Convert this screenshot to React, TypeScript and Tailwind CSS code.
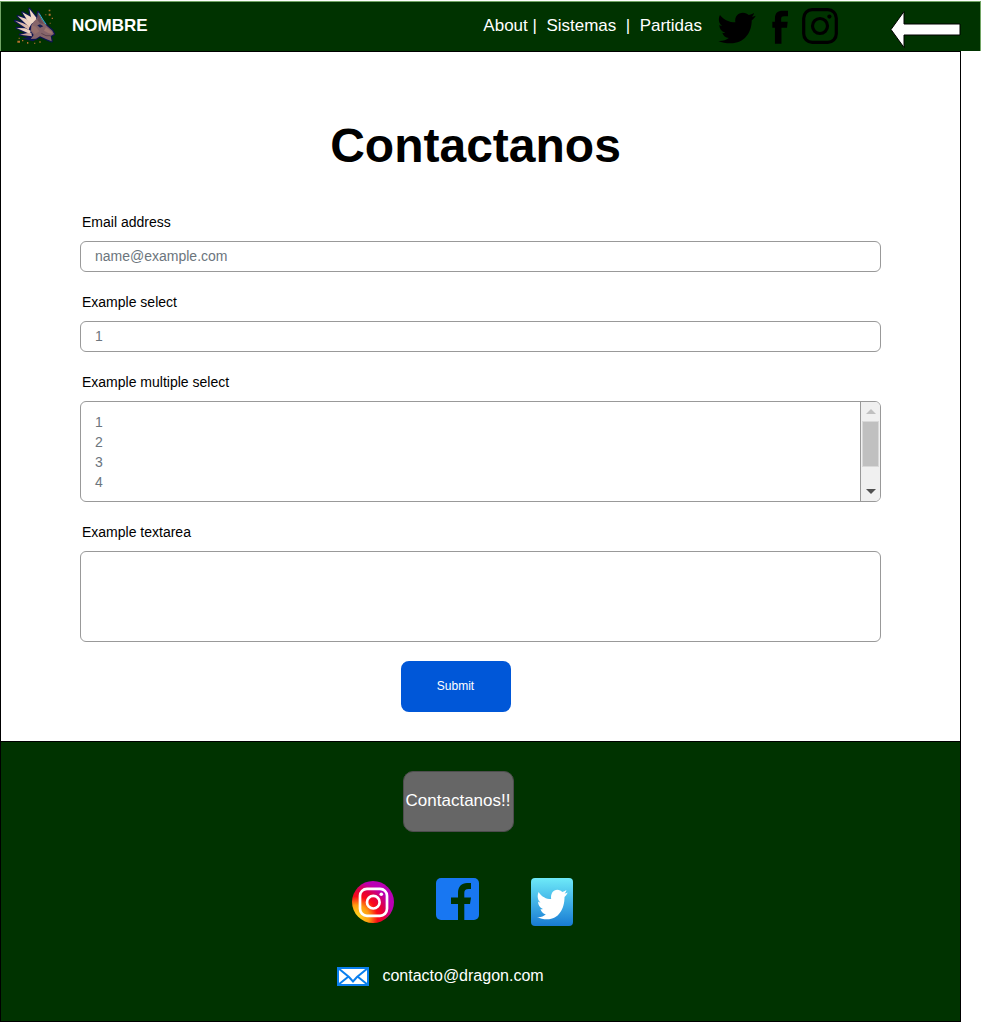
import React from "react";

function DragonShapes() {
  return (
    <>
      <path d="M52 14 L72 40 L74 50 L60 54 Z" fill="#f0d8c6" />
      <path d="M31 25 L56 38 L67 54 L54 62 Z" fill="#f0d8c6" />
      <path d="M17 36 L42 44 L59 59 L52 70 Z" fill="#ecd0be" />
      <path d="M9 50 L32 57 L53 67 L50 78 Z" fill="#dcb9aa" />
      <path d="M14 72 L40 73 L56 80 L54 90 Z" fill="#ecd0be" />
      <path d="M24 92 L44 88 L58 86 L60 97 Z" fill="#c9a59b" />
      <path
        d="M78 24 L90 46 L104 65 L121 80 L126 90 L116 96 L119 112 L102 105 L84 97 L72 104 L56 105 L65 93 L56 80 L58 63 L68 50 L76 42 Z"
        fill="#86656a"
      />
    </>
  );
}

function DragonLogo() {
  return (
    <svg viewBox="0 0 138 132" className="h-11 w-[46px] shrink-0" aria-hidden="true">
      <g stroke="#0d1452" strokeWidth="7" strokeLinejoin="round">
        <DragonShapes />
      </g>
      <path d="M30 104 L60 96 L84 98 L64 112 Z" fill="#0d1452" />
      <DragonShapes />
      <path d="M79 28 L88 48 L96 60 L84 58 L76 48 Z" fill="#6a4d58" />
      <path d="M60 64 L72 68 L82 82 L70 90 L59 80 Z" fill="#96706d" />
      <path d="M102 70 L119 83 L121 89 L110 88 L96 80 Z" fill="#a07872" />
      <path d="M81 28 L87 38 L93 48 L102 61" fill="none" stroke="#2fc4c4" strokeWidth="3" />
      <path d="M76 64 L84 61 L94 67 L84 71 Z" fill="#172052" />
      <path d="M88 88 L102 95 L116 95" fill="none" stroke="#4c3541" strokeWidth="2" />
      <path
        d="M110 17h5v5h-5z M110 29h6v6h-6z M119 41h4v4h-4z M100 31h3v3h-3z M16 110h8v6h-8z M20 101h3v4h-3z M30 108h4v4h-4z M45 114h4v5h-4z M66 116h4v3h-4z M82 112h4v4h-4z M113 56h3v3h-3z"
        fill="#b5722c"
      />
    </svg>
  );
}

function Bird({ className }: { className: string }) {
  return (
    <svg viewBox="14 16 116 96" preserveAspectRatio="none" className={className} fill="currentColor" aria-hidden="true">
      <path d="M20 25 C32 40 48 47 67 47 C64 30 75 18 90 18 C98 18 104 21 108 25 C114 24 119 22 124 19 C123 24 121 27 117 30 C121 30 125 29 129 27 C126 33 122 37 117 41 C117 78 95 110 52 110 C38 110 25 108 15 103 C28 104 38 101 47 94 C37 93 30 87 27 78 C30 79 33 79 36 78 C24 74 18 66 18 55 C21 57 24 58 27 58 C16 50 14 37 20 25 Z" />
    </svg>
  );
}

function FacebookLetter() {
  return (
    <svg viewBox="0 0 49 102" className="h-[34px] w-4" fill="currentColor" aria-hidden="true">
      <path d="M9 102 V53 H1 V35 H9 V24 C9 8 18 1 32 1 H49 V18 H37 C31 18 28 20 28 26 V35 H48 L46 53 H29 V102 Z" />
    </svg>
  );
}

function InstagramOutline() {
  return (
    <svg viewBox="0 0 36 36" className="size-9" fill="none" stroke="currentColor" aria-hidden="true">
      <rect x="1.7" y="1.7" width="32.6" height="32.6" rx="8.5" strokeWidth="3.2" />
      <circle cx="18" cy="18" r="7.5" strokeWidth="3.2" />
      <circle cx="27.4" cy="8.6" r="2.1" fill="currentColor" stroke="none" />
    </svg>
  );
}

function InstagramBadge() {
  return (
    <svg viewBox="0 0 42 42" className="size-[42px]" aria-hidden="true">
      <defs>
        <radialGradient id="instagram-fill" cx="0.1" cy="0.88" r="1.02">
          <stop offset="0.05" stopColor="#ffd51f" />
          <stop offset="0.3" stopColor="#ff9b10" />
          <stop offset="0.5" stopColor="#fb0b16" />
          <stop offset="0.65" stopColor="#e3003e" />
          <stop offset="0.85" stopColor="#b900b4" />
        </radialGradient>
      </defs>
      <circle cx="21" cy="21" r="21" fill="url(#instagram-fill)" />
      <g fill="none" stroke="#fff" strokeWidth="2.7">
        <rect x="8" y="7.8" width="27" height="27" rx="7" />
        <circle cx="21.3" cy="21.2" r="6.3" />
      </g>
      <circle cx="29.3" cy="13.3" r="1.8" fill="#fff" />
    </svg>
  );
}

function FacebookBadge() {
  return (
    <svg viewBox="0 0 43 42" className="h-[42px] w-[43px]" aria-hidden="true">
      <rect width="43" height="42" rx="5" fill="#1877f2" />
      <path
        d="M22 42 V26 H15 V19.5 H22 V15 C22 8.5 25.8 5 31 5 H35 V11 H32.5 C29.5 11 28.3 12.2 28.3 15 V19.5 H35 L34 26 H28.3 V42 Z"
        fill="#003300"
      />
    </svg>
  );
}

function Envelope() {
  return (
    <svg viewBox="0 0 32 19" className="h-[19px] w-8 shrink-0" aria-hidden="true">
      <rect x="1" y="1" width="30" height="17" fill="#fff" stroke="#0a7fee" strokeWidth="2" />
      <path d="M1 1 L12 10 L16 14.5 L20 10 L31 1 M1 18 L11.5 9.5 M31 18 L20.5 9.5" fill="none" stroke="#0a7fee" strokeWidth="2" />
    </svg>
  );
}

function Header() {
  return (
    <header className="flex h-[50px] items-center border border-b-0 border-[#72a565] bg-[#003300] pb-0.5 text-[17px] text-white">
      <div className="flex flex-1 items-center gap-3.5 pl-[11px]">
        <DragonLogo />
        <span className="font-bold">NOMBRE</span>
      </div>
      <nav className="flex items-center whitespace-pre">
        <a href="#about">About</a>
        <span>{" |  "}</span>
        <a href="#sistemas">Sistemas</a>
        <span>{"  |  "}</span>
        <a href="#partidas">Partidas</a>
      </nav>
      <div className="ml-4 flex items-center text-black">
        <a href="#twitter" aria-label="Twitter" className="pt-1">
          <Bird className="h-8 w-[38px]" />
        </a>
        <a href="#facebook" aria-label="Facebook" className="ml-4 pt-0.5">
          <FacebookLetter />
        </a>
        <a href="#instagram" aria-label="Instagram" className="ml-3.5 pt-px">
          <InstagramOutline />
        </a>
      </div>
      <button type="button" aria-label="Volver" className="mr-[19px] ml-[52px] pt-1.5">
        <svg viewBox="0 0 71 38" className="h-[38px] w-[71px]" aria-hidden="true">
          <path d="M1 19.5 L14 1.5 V14 H70 V25 H14 V37.5 Z" fill="#fff" stroke="#000" />
        </svg>
      </button>
    </header>
  );
}

const labelClass = "block pl-0.5 text-sm leading-5 text-black";
const fieldClass =
  "mt-[9px] block w-full appearance-none rounded-md border border-[#999] bg-white px-3.5 text-sm text-[#6c757d] outline-none";

function ContactForm() {
  return (
    <form className="px-[79px] pt-[39px]" onSubmit={(event) => event.preventDefault()}>
      <div>
        <label htmlFor="email" className={labelClass}>Email address</label>
        <input
          id="email"
          type="email"
          placeholder="name@example.com"
          className={`${fieldClass} h-[31px] pb-0.5 placeholder:text-[#6c757d]`}
        />
      </div>
      <div className="mt-5">
        <label htmlFor="single" className={labelClass}>Example select</label>
        <select id="single" className={`${fieldClass} h-[31px] pb-0.5`}>
          <option>1</option>
          <option>2</option>
          <option>3</option>
          <option>4</option>
          <option>5</option>
        </select>
      </div>
      <div className="mt-5">
        <label htmlFor="multiple" className={labelClass}>Example multiple select</label>
        <div className="mt-[9px] flex h-[101px] overflow-hidden rounded-md border border-[#999]">
          <select
            id="multiple"
            multiple
            size={4}
            className="mt-3 h-20 min-w-0 flex-1 appearance-none overflow-y-auto bg-white px-3.5 text-sm leading-5 text-[#6c757d] outline-none [scrollbar-width:none]"
          >
            <option className="h-5 p-0 leading-5">1</option>
            <option className="h-5 p-0 leading-5">2</option>
            <option className="h-5 p-0 leading-5">3</option>
            <option className="h-5 p-0 leading-5">4</option>
            <option className="h-5 p-0 leading-5">5</option>
          </select>
          <div className="flex w-5 flex-col items-center border-l border-[#999] bg-[#f0f0f0]" aria-hidden="true">
            <svg viewBox="0 0 10 5" className="mt-[7px] h-[5px] w-2.5"><path d="M0 5 L5 0 L10 5Z" fill="#c0c0c0" /></svg>
            <div className="mt-[7px] h-[46px] w-[17px] border border-[#d9d9d9] bg-[#c0c0c0]" />
            <svg viewBox="0 0 10 5" className="mt-auto mb-[7px] h-[5px] w-2.5"><path d="M0 0 L5 5 L10 0Z" fill="#505050" /></svg>
          </div>
        </div>
      </div>
      <div className="mt-5">
        <label htmlFor="message" className={labelClass}>Example textarea</label>
        <textarea id="message" className={`${fieldClass} h-[91px] resize-none py-2`} />
      </div>
      <div className="flex justify-center pt-[19px] pr-[50px]">
        <button type="submit" className="h-[51px] w-[110px] rounded-lg bg-[#0057d8] pb-0.5 text-xs text-white">
          Submit
        </button>
      </div>
    </form>
  );
}

function Footer() {
  return (
    <footer className="flex flex-col items-center border-y border-black bg-[#003300] pt-[29px] pb-[33px] text-white">
      <div className="pr-[45px]">
        <button type="button" className="h-[61px] w-[111px] rounded-[10px] border border-[#4d4d4d] bg-[#666] pb-0.5 text-[17px] whitespace-nowrap">
          Contactanos!!
        </button>
      </div>
      <div className="mt-[46px] flex items-center pr-9">
        <a href="#instagram" aria-label="Instagram"><InstagramBadge /></a>
        <a href="#facebook" aria-label="Facebook" className="ml-[42px] pb-1.5"><FacebookBadge /></a>
        <a
          href="#twitter"
          aria-label="Twitter"
          className="ml-[52px] flex h-12 w-[42px] items-center justify-center rounded bg-linear-to-b from-[#6eeaf8] to-[#187bd3]"
        >
          <Bird className="mt-1 size-[31px]" />
        </a>
      </div>
      <div className="mt-[38px] flex items-center gap-[13px] pr-20">
        <Envelope />
        <a href="mailto:contacto@dragon.com">contacto@dragon.com</a>
      </div>
    </footer>
  );
}

export default function App() {
  return (
    <div className="min-h-screen bg-white pt-px font-['Liberation_Sans',Arial,sans-serif]">
      <Header />
      <div className="mr-5 border-x border-black">
        <main className="border-t border-black pt-[67px] pb-[29px]">
          <h1 className="pr-2.5 text-center text-5xl leading-[54px] font-bold text-black">Contactanos</h1>
          <ContactForm />
        </main>
        <Footer />
      </div>
    </div>
  );
}
